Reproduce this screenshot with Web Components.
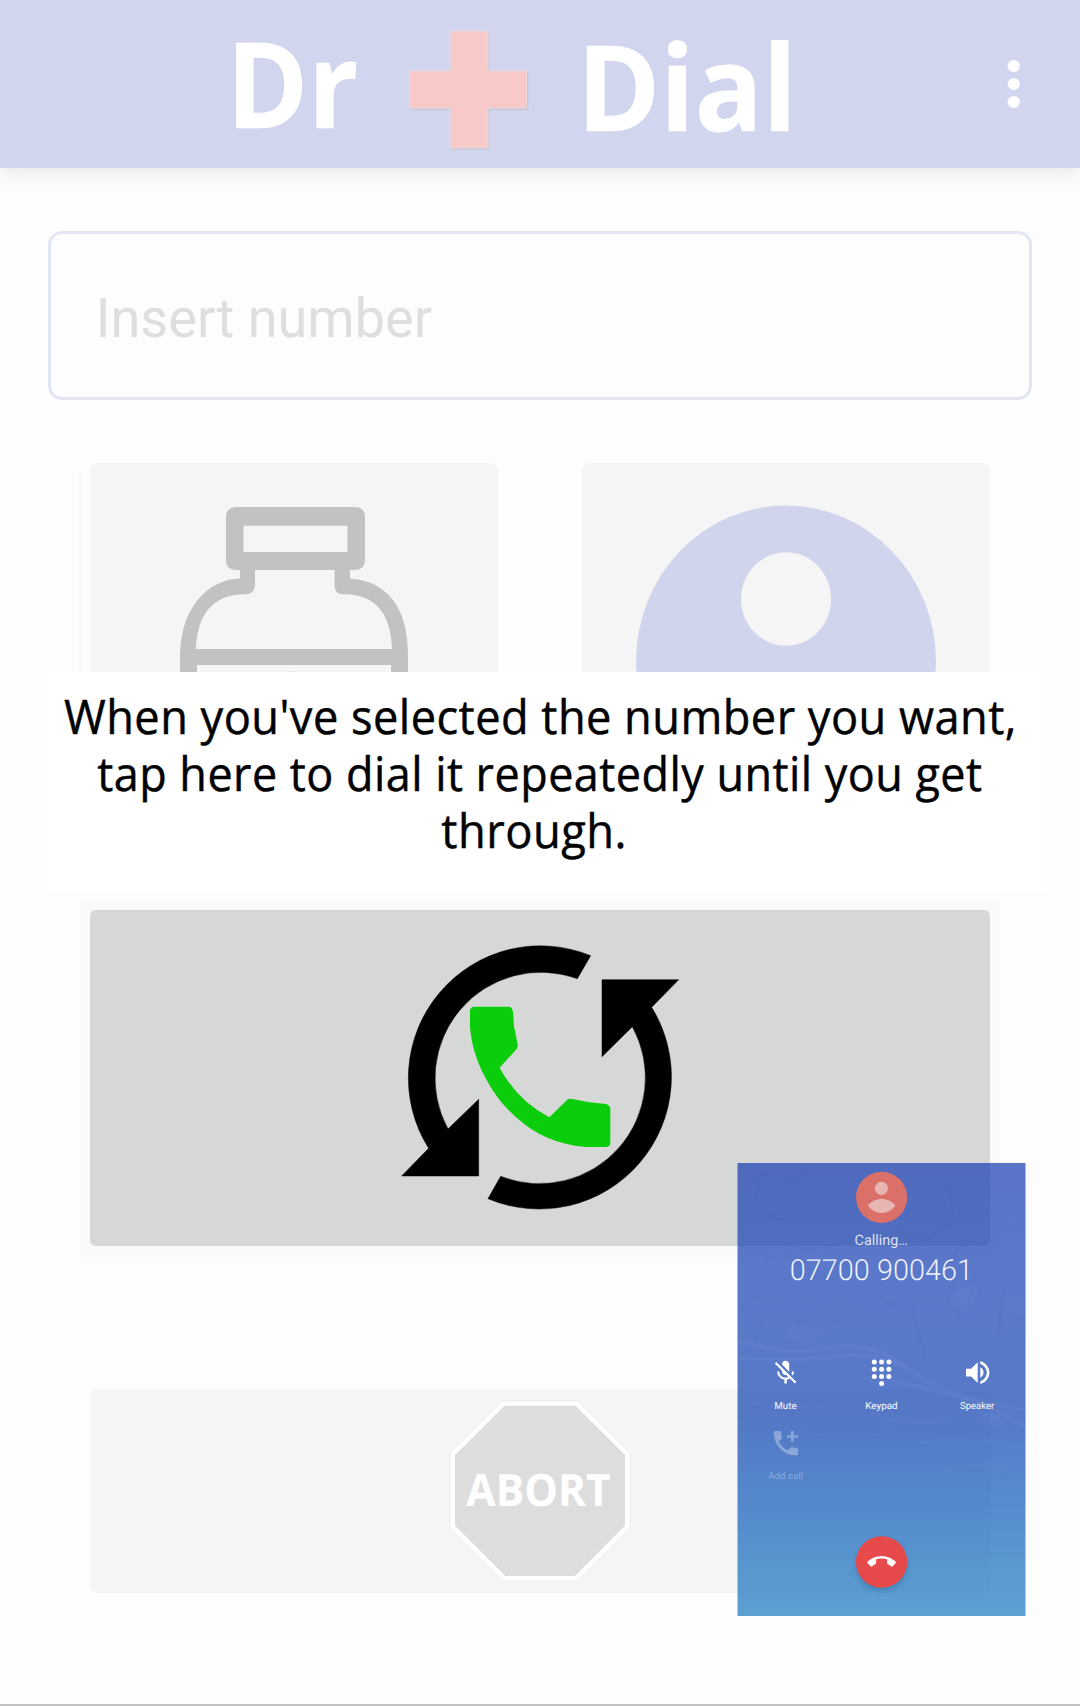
<!DOCTYPE html>
<html lang="en">
<head>
<meta charset="utf-8">
<title>Dr Dial</title>
<style>
html,body{margin:0;padding:0}
body{width:1080px;height:1706px;overflow:hidden;background:#fdfdfd;font-family:"Open Sans","Noto Sans",sans-serif}
</style>
</head>
<body>
<dial-app></dial-app>
<script>
const HUMANIST = '"Open Sans","Noto Sans",sans-serif';
const ROBOTO = 'Roboto,sans-serif';
const ctx = document.createElement('canvas').getContext('2d');

/* Stretches each <text data-ink="left,right"> so its ink spans those x positions. */
function fitInk(root) {
  root.querySelectorAll('text[data-ink]').forEach(t => {
    const [a, b] = t.dataset.ink.split(',').map(Number);
    const fam = t.dataset.face === 'roboto' ? ROBOTO : HUMANIST;
    const size = Number(t.getAttribute('font-size')), w = t.getAttribute('font-weight') || 400;
    const track = Number(t.dataset.track || 0);
    t.style.fontFamily = fam;
    t.style.letterSpacing = track + 'px';
    t.style.textRendering = 'geometricPrecision';
    /* measured ten times larger, so that hinting does not round the widths */
    ctx.font = `${w} ${size * 10}px ${fam}`;
    const m = ctx.measureText(t.textContent);
    const left = m.actualBoundingBoxLeft / 10;
    const right = m.actualBoundingBoxRight / 10 + track * (t.textContent.length - 1);
    const s = (b - a) / (left + right);
    t.setAttribute('transform', `translate(${a + left * s} ${t.dataset.base}) scale(${s} 1)`);
  });
}
function define(name, html) {
  const tpl = document.createElement('template');
  tpl.innerHTML = html;
  customElements.define(name, class extends HTMLElement {
    constructor() {
      super();
      this.attachShadow({ mode: 'open' }).append(tpl.content.cloneNode(true));
      fitInk(this.shadowRoot);
    }
  });
}

define('app-header', `
<style>
:host{display:block;height:168px;background:#d2d5ee;box-shadow:0 6px 22px rgba(0,0,0,.075),0 3px 8px rgba(0,0,0,.02);flex:none}
svg{display:block}
</style>
<svg width="1080" height="168" fill="#fff">
  <text data-ink="235.2,356.6" data-base="128" font-size="119" font-weight="700" stroke="#fff" stroke-width=".6">Dr</text>
  <path transform="translate(1.4 1.6)" fill="#c5c8d2" d="M450.5 30.5H488V70.5H527V108.3H488V148.3H450.5V108.3H409.5V70.5H450.5Z"/>
  <path fill="#f8c9c9" stroke="#e3d9e3" stroke-width=".8" d="M450.5 31H488V70.8H526.8V108.2H488V148H450.5V108.2H409.7V70.8H450.5Z"/>
  <text data-ink="585.8,789" data-base="130.7" font-size="119" font-weight="700" stroke="#fff" stroke-width=".6">Dial</text>
  <circle cx="1013.8" cy="66" r="6.1"/><circle cx="1013.8" cy="84" r="6.1"/><circle cx="1013.8" cy="102" r="6.1"/>
</svg>`);

define('number-field', `
<style>
:host{display:block;box-sizing:border-box;margin:63px 48px 0;width:984px;height:169px;border:3px solid #e2e6f4;border-radius:14px;flex:none}
svg{display:block}
</style>
<svg width="978" height="163"><text data-face="roboto" data-ink="49,380.5" data-base="103" font-size="54.6" fill="#dedede">Insert number</text></svg>`);

define('tile-button', `
<style>
:host{display:block;background:#f5f5f5;border-radius:6px;overflow:hidden}
</style><slot></slot>`);

define('bottle-icon', `
<style>:host{display:block}svg{display:block}</style>
<svg width="408" height="336" viewBox="90 463 408 336">
  <g fill="#c2c2c2">
    <path fill-rule="evenodd" d="M235 507H356Q365 508 365 517V560Q365 569 356 570H350V578.5C386 581 408 606 408 655V760H180V655C181 610 205 580 240 578.5V570H235Q226 569 226 560V517Q226 508 235 507ZM243.5 525.7V552H347.5V525.7ZM255 570V586Q254 593 247 594.3C216 593 197 612 196 649H392C391 612 374 593 341 594.3Q335 593 334.500 586V570ZM197 665V745H391V665Z"/>
    <path fill="#e8e8e8" d="M288 672Q293 670 298 672Z"/>
  </g>
</svg>`);

define('contact-icon', `
<style>:host{display:block}svg{display:block}</style>
<svg width="408" height="336" viewBox="582 463 408 336">
  <ellipse cx="786" cy="661.500" rx="150" ry="156" fill="#d1d4ed"/>
  <ellipse cx="786" cy="599" rx="45" ry="46.800" fill="#f5f5f5"/>
</svg>`);

define('redial-button', `
<style>
:host{display:block;box-sizing:border-box;width:920px;height:358px;margin:101px 0 0 80px;padding:10px;background:#fafafa;flex:none}
div{height:336px;background:#d6d8d7;border-radius:6px;display:flex;justify-content:center}
svg{display:block;margin-top:10px}
</style>
<div><svg width="320" height="320" viewBox="0 0 960 960">
  <g stroke="#000" stroke-width="1.500">
  <path d="M632 107A396.500 396.500 0 0 0 146 685L65 768H296V538L204 627A318 318 0 0 1 592 176Z"/>
  <path d="M324 836A396.500 396.500 0 0 0 815 262L896 179H666V410L757 320A318 318 0 0 1 362 769Z"/>
  </g>
  <path fill="#0ccd0c" d="M280 260H389Q397 263 399 276Q400 285 402 318L413 373Q414 382 408 389L359 443Q410 540 508 592L562 539Q566 535 576 537L628 547L678 552Q690 556 691 565V670Q690 680 680 681H615C535 674 468 646 408 592C366 554 341 519 317 475C281 407 273 357 270 320V270Q272 262 280 260Z"/>
</svg></div>`);

define('abort-button', `
<style>
:host{display:flex;justify-content:center;width:900px;height:204px;margin:131px 0 0 90px;background:#f5f5f5;border-radius:6px;flex:none}
svg{display:block}
</style>
<svg width="240" height="204" viewBox="420 1389 240 204">
  <path fill="#fff" stroke="#d0d0d0" stroke-width=".6" stroke-dasharray="1 1" d="M502.700 1401H577.300L630 1453.300V1528.300L577.300 1581H502.700L450 1528.300V1453.300Z"/>
  <path fill="#ddd" d="M504.500 1405.700H575.700L625 1455V1525.700L575 1576H505.500L455 1525.700V1455Z"/>
  <text data-ink="466.3,610" data-base="1505.7" font-size="44.500" font-weight="700" fill="#fff">ABORT</text>
</svg>`);

define('help-message', `
<style>:host{display:block;width:999px;height:219px;background:#fff}svg{display:block}</style>
<svg width="999" height="219" viewBox="48 672 999 219" fill="#000" stroke="#000" stroke-width=".45">
  <text data-ink="64,1013.200" data-base="733.7" font-size="47.500" data-track=".5">When you've selected the number you want,</text>
  <text data-ink="98,981.500" data-base="790.7" font-size="47.500" data-track=".5">tap here to dial it repeatedly until you get</text>
  <text data-ink="442,623.700" data-base="847.7" font-size="47.500" data-track=".5">through.</text>
</svg>`);

define('call-preview', `
<style>:host{display:block;width:290px;height:453px}svg{display:block}</style>
<svg width="290" height="453" viewBox="737 1163 290 453">
  <defs>
    <linearGradient id="sky" x1="0" y1="0" x2="0" y2="1">
      <stop offset="0" stop-color="#1b40b4"/><stop offset=".3" stop-color="#1b45b5"/>
      <stop offset=".55" stop-color="#1546b3"/><stop offset=".76" stop-color="#165fbc"/>
      <stop offset=".9" stop-color="#1a73bf"/><stop offset="1" stop-color="#1d7bc3"/>
    </linearGradient>
    <filter id="soft" x="-50%" y="-50%" width="200%" height="200%"><feGaussianBlur stdDeviation="3"/></filter>
    <filter id="haze"><feGaussianBlur stdDeviation="1"/></filter>
  </defs>
  <rect x="737.500" y="1163" width="288" height="453" fill="url(#sky)" opacity=".72"/>
  <g fill="none" stroke-linejoin="round" filter="url(#haze)">
    <g stroke="#233f9b" stroke-opacity=".06" stroke-width="1.200">
      <path d="M738 1181L765 1173 790 1182 812 1167M760 1173L755 1202 777 1220 812 1212M905 1165L920 1184 948 1188 987 1177 1025 1186M948 1188L954 1217 927 1240 898 1232M954 1217L1000 1212 1024 1221M765 1265L783 1242 807 1252 846 1242M738 1310L764 1290 793 1302 827 1296 870 1311M868 1287L900 1310 942 1293 965 1322M920 1255L945 1265 966 1240 1000 1250M820 1310L846 1328 883 1324"/>
      <path d="M762 1324L752 1344M804 1310L794 1345M912 1310L927 1361M975 1276L966 1320M1004 1292L997 1338"/>
    </g>
    <g stroke="#a2b5ef" stroke-opacity=".1" stroke-width="3">
      <path d="M738 1340Q785 1357 828 1348T909 1369 1025 1410M738 1357Q787 1363 837 1356T929 1384M895 1381Q940 1392 965 1399T1025 1426"/>
    </g>
    <g stroke="#a2b5ef" stroke-opacity=".06" stroke-width="2">
      <path d="M956 1389Q978 1418 998 1417M748 1401Q795 1414 835 1402M870 1413Q914 1428 955 1419M920 1443Q965 1436 1025 1447M795 1431Q840 1442 895 1432M945 1470Q980 1461 1015 1474"/>
    </g>
    <g fill="#899fe0" fill-opacity=".08" stroke="none"><path d="M959 1285L979 1288 970 1311 950 1305ZM1007 1296L1024 1299V1314L1005 1310ZM867 1378L889 1373 900 1385 877 1391ZM976 1410L1007 1417 1001 1430 982 1423ZM790 1324L823 1330 812 1345 787 1339Z"/></g>
  </g>
  <circle cx="881.600" cy="1197.400" r="25.600" fill="#db7068"/>
  <circle cx="881.400" cy="1188.300" r="6.600" fill="#e7b5b2"/>
  <path fill="#e7b5b2" d="M867.700 1205.500Q874 1198.800 881.600 1198.800T895.500 1205.500Q890 1213 881.600 1213T867.700 1205.500Z"/>
  <g fill="#fff">
    <text data-face="roboto" data-ink="855.3,907" data-base="1245.3" font-size="14.500" fill-opacity=".82">Calling…</text>
    <text data-face="roboto" data-ink="791.2,966.800" data-base="1279.6" font-size="29" font-weight="300" fill-opacity=".92">07700 900461</text>
    <path transform="translate(771.200 1358.300) scale(1.200)" d="M19 11h-1.700c0 .74-.16 1.430-.43 2.050l1.230 1.230c.56-.98.9-2.090.9-3.280zm-4.020.17c0-.06.02-.11.02-.17V5c0-1.660-1.340-3-3-3S9 3.340 9 5v.18l5.980 5.990zM4.270 3L3 4.270l6.010 6.010V11c0 1.660 1.330 3 2.990 3 .22 0 .44-.03.65-.08l1.660 1.660c-.71.33-1.500.52-2.310.52-2.760 0-5.300-2.100-5.300-5.100H5c0 3.410 2.720 6.230 6 6.720V21h2v-3.280c.91-.13 1.770-.45 2.540-.9L19.730 21 21 19.730 4.270 3z"/>
    <g><circle cx="874.300" cy="1362" r="2.500"/><circle cx="881.600" cy="1362" r="2.500"/><circle cx="888.900" cy="1362" r="2.500"/><circle cx="874.300" cy="1369.200" r="2.500"/><circle cx="881.600" cy="1369.200" r="2.500"/><circle cx="888.900" cy="1369.200" r="2.500"/><circle cx="874.300" cy="1376.400" r="2.500"/><circle cx="881.600" cy="1376.400" r="2.500"/><circle cx="888.900" cy="1376.400" r="2.500"/><circle cx="881.600" cy="1383.600" r="2.500"/></g>
    <path transform="translate(962.100 1357) scale(1.300)" d="M3 9v6h4l5 5V4L7 9H3zm13.500 3c0-1.770-1.020-3.290-2.500-4.030v8.050c1.480-.73 2.500-2.250 2.500-4.020zM14 3.230v2.060c2.890.86 5 3.540 5 6.710s-2.110 5.850-5 6.710v2.060c4.010-.91 7-4.490 7-8.770s-2.990-7.860-7-8.770z"/>
    <g fill-opacity=".9" stroke="#fff" stroke-opacity=".5" stroke-width=".2">
      <text data-face="roboto" data-ink="775,796.300" data-base="1408.500" font-size="9.700">Mute</text>
      <text data-face="roboto" data-ink="866,897" data-base="1408.500" font-size="9.700">Keypad</text>
      <text data-face="roboto" data-ink="960.3,994.200" data-base="1408.500" font-size="9.700">Speaker</text>
    </g>
    <g fill-opacity=".32">
      <path transform="translate(769.700 1427) scale(1.350)" d="M20 15.500c-1.250 0-2.450-.2-3.570-.57a1.020 1.020 0 0 0-1.020.24l-2.200 2.200a15.070 15.070 0 0 1-6.590-6.590l2.200-2.210a.96.96 0 0 0 .25-1A11.360 11.360 0 0 1 8.500 4c0-.55-.45-1-1-1H4c-.55 0-1 .45-1 1 0 9.390 7.610 17 17 17 .55 0 1-.45 1-1v-3.500c0-.55-.45-1-1-1zM15.800 3v3.100H12.700v1.900H15.800V11h1.900V8H21v-1.900H17.700V3z"/>
      <text data-face="roboto" data-ink="768.4,802.3" data-base="1479.2" font-size="9.700">Add call</text>
    </g>
  </g>
  <ellipse cx="881.600" cy="1566" rx="24.500" ry="24" fill="#193d69" opacity=".35" filter="url(#soft)"/>
  <circle cx="881.600" cy="1562" r="25.700" fill="#e64a4a"/>
  <path fill="#fff" transform="translate(867.300 1547.700) scale(1.190)" d="M12 9c-1.600 0-3.150.25-4.600.72v3.100c0 .39-.23.74-.56.9-.98.49-1.870 1.120-2.660 1.850-.18.18-.43.28-.7.28-.28 0-.53-.11-.71-.29L.29 13.080c-.18-.17-.29-.42-.29-.7 0-.28.11-.53.29-.71C3.340 8.780 7.460 7 12 7s8.660 1.780 11.710 4.670c.18.18.29.43.29.71 0 .28-.11.53-.29.71l-2.480 2.480c-.18.18-.43.29-.71.29-.27 0-.52-.11-.7-.28-.79-.74-1.690-1.360-2.670-1.850-.33-.16-.56-.5-.56-.9v-3.100C15.150 9.250 13.600 9 12 9z"/>
</svg>`);

define('dial-app', `
<style>
:host{display:flex;flex-direction:column;position:relative;box-sizing:border-box;width:1080px;height:1706px;background:#fdfdfd;border-bottom:2px solid #c2c2c2;overflow:hidden}
.tiles{display:flex;margin-top:63px;height:336px;flex:none}
.edge{width:4px;margin:7px 7px 0 79px;background:#fafafa}
tile-button{width:408px;height:336px}
tile-button+tile-button{margin-left:84px}
help-message{position:absolute;left:48px;top:672px}
call-preview{position:absolute;left:737px;top:1163px}
</style>
<app-header></app-header>
<number-field></number-field>
<div class="tiles"><div class="edge"></div>
  <tile-button><bottle-icon></bottle-icon></tile-button>
  <tile-button><contact-icon></contact-icon></tile-button>
</div>
<redial-button></redial-button>
<abort-button></abort-button>
<help-message></help-message>
<call-preview></call-preview>`);
</script>
</body>
</html>
